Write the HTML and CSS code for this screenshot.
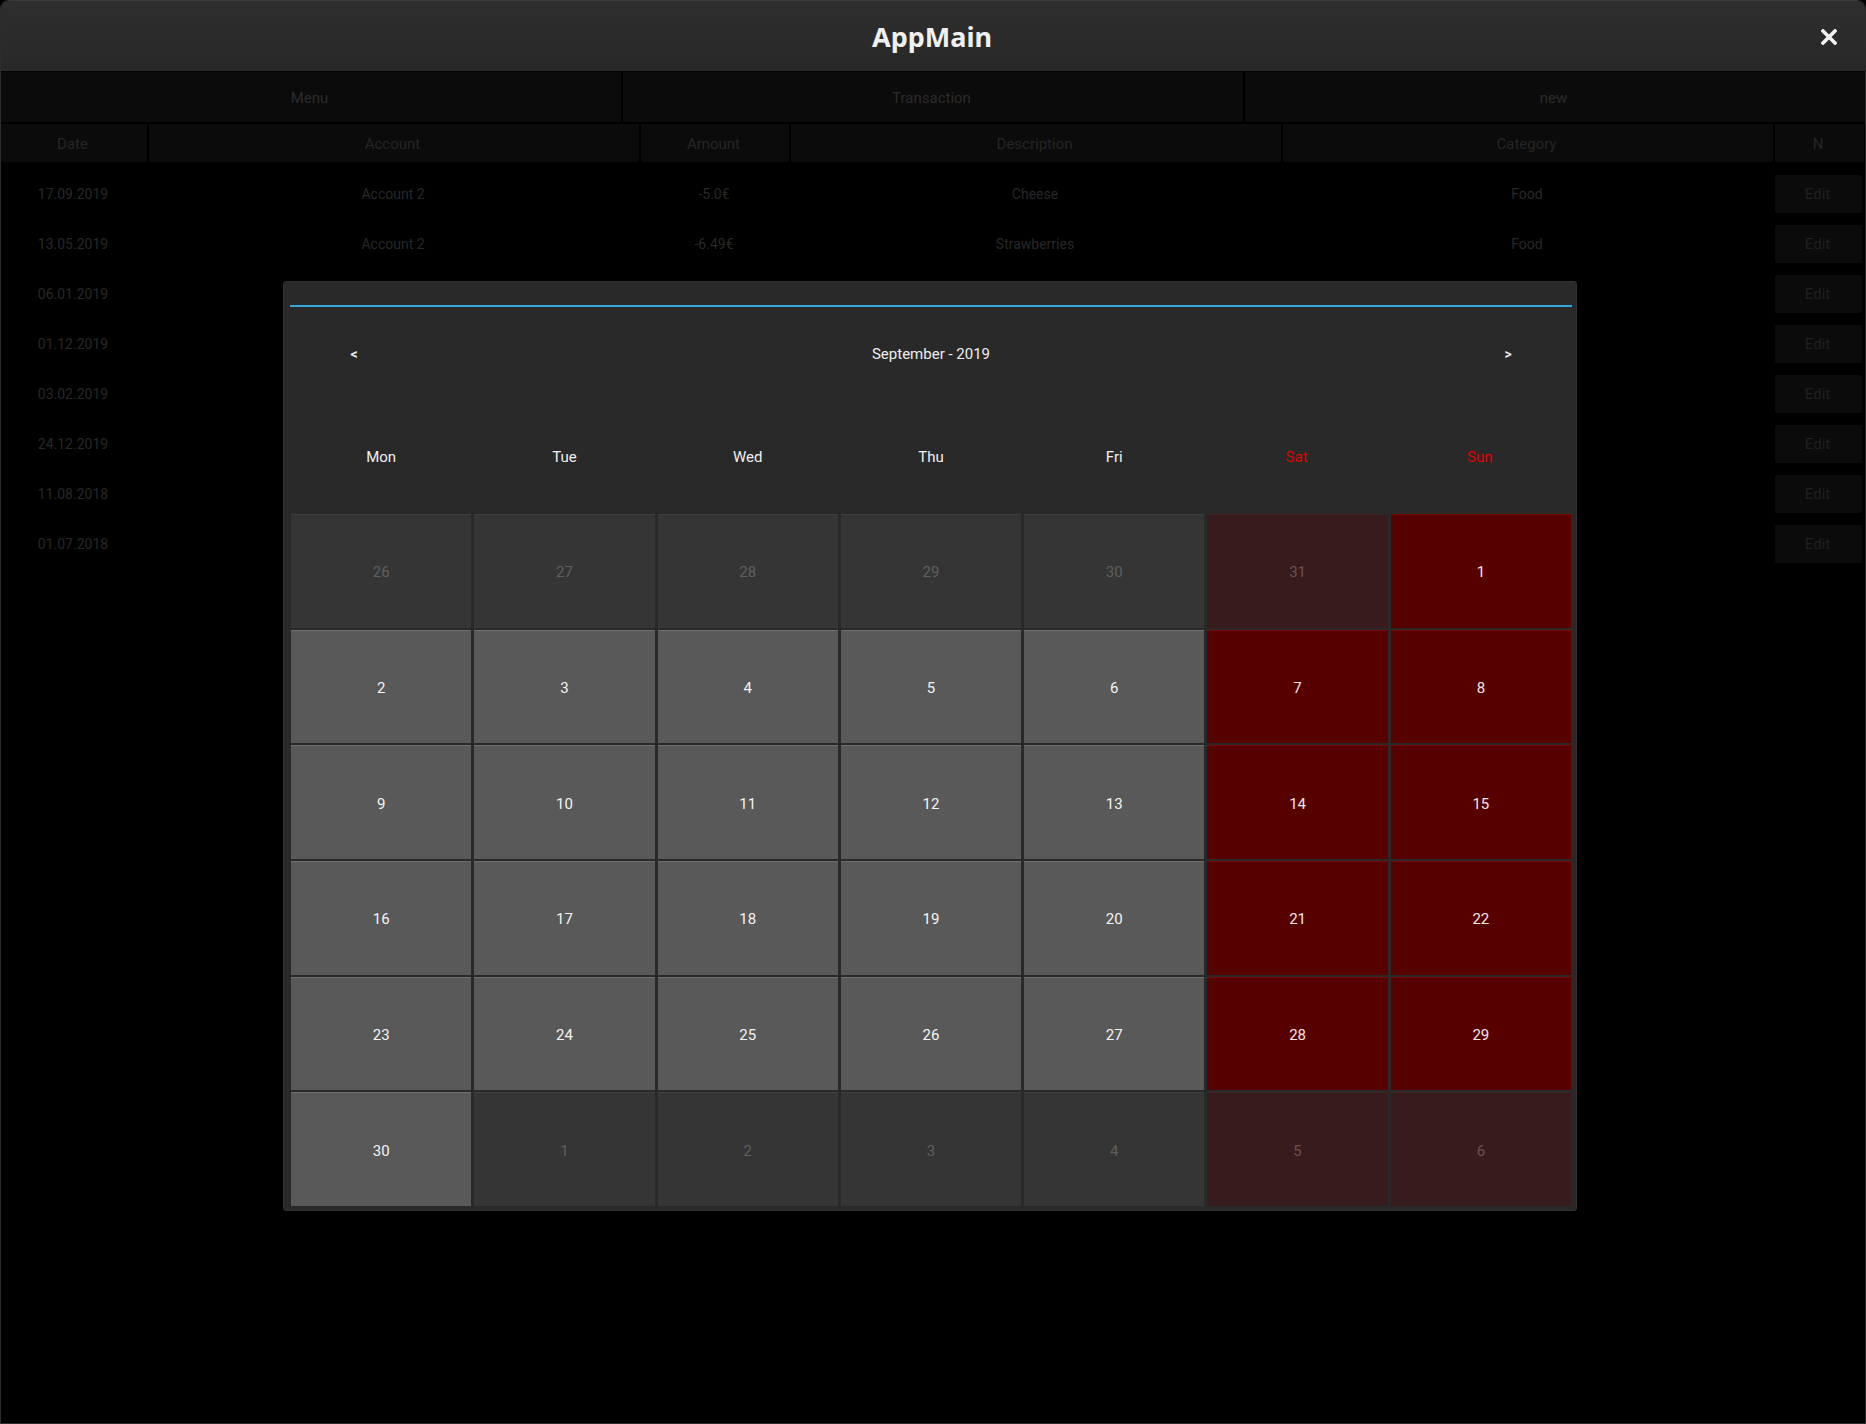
FILE: index.html
```html
<!DOCTYPE html>
<html>
<head>
<meta charset="utf-8">
<title>AppMain</title>
<link rel="stylesheet" href="styles.css">
</head>
<body>
<div class="window">
  <header class="titlebar">
    <div class="title">AppMain</div>
    <div class="close">
      <svg width="16" height="16" viewBox="0 0 16 16"><path d="M2 2 L14 14 M14 2 L2 14" stroke="#f2f2f2" stroke-width="3.6" stroke-linecap="square"/></svg>
    </div>
  </header>

  <nav class="tabs">
    <div class="tab">Menu</div>
    <div class="tab">Transaction</div>
    <div class="tab">new</div>
  </nav>

  <div class="table">
    <div class="thead">
      <div class="th">Date</div>
      <div class="th">Account</div>
      <div class="th">Amount</div>
      <div class="th">Description</div>
      <div class="th">Category</div>
      <div class="th">N</div>
    </div>
    <div class="tbody">
      <div class="tr"><div class="td">17.09.2019</div><div class="td">Account 2</div><div class="td">-5.0€</div><div class="td">Cheese</div><div class="td">Food</div><div class="td"><span class="edit">Edit</span></div></div>
      <div class="tr"><div class="td">13.05.2019</div><div class="td">Account 2</div><div class="td">-6.49€</div><div class="td">Strawberries</div><div class="td">Food</div><div class="td"><span class="edit">Edit</span></div></div>
      <div class="tr"><div class="td">06.01.2019</div><div class="td"></div><div class="td"></div><div class="td"></div><div class="td"></div><div class="td"><span class="edit">Edit</span></div></div>
      <div class="tr"><div class="td">01.12.2019</div><div class="td"></div><div class="td"></div><div class="td"></div><div class="td"></div><div class="td"><span class="edit">Edit</span></div></div>
      <div class="tr"><div class="td">03.02.2019</div><div class="td"></div><div class="td"></div><div class="td"></div><div class="td"></div><div class="td"><span class="edit">Edit</span></div></div>
      <div class="tr"><div class="td">24.12.2019</div><div class="td"></div><div class="td"></div><div class="td"></div><div class="td"></div><div class="td"><span class="edit">Edit</span></div></div>
      <div class="tr"><div class="td">11.08.2018</div><div class="td"></div><div class="td"></div><div class="td"></div><div class="td"></div><div class="td"><span class="edit">Edit</span></div></div>
      <div class="tr"><div class="td">01.07.2018</div><div class="td"></div><div class="td"></div><div class="td"></div><div class="td"></div><div class="td"><span class="edit">Edit</span></div></div>
    </div>
  </div>

  <div class="dialog">
    <div class="input"></div>
    <div class="nav">
      <div class="navbtn">&lt;</div>
      <div class="month">September - 2019</div>
      <div class="navbtn">&gt;</div>
    </div>
    <div class="weekdays">
      <div class="wd">Mon</div>
      <div class="wd">Tue</div>
      <div class="wd">Wed</div>
      <div class="wd">Thu</div>
      <div class="wd">Fri</div>
      <div class="wd we">Sat</div>
      <div class="wd we">Sun</div>
    </div>
    <div class="grid">
      <div class="day dim">26</div><div class="day dim">27</div><div class="day dim">28</div><div class="day dim">29</div><div class="day dim">30</div><div class="day wdim">31</div><div class="day wknd">1</div>
      <div class="day">2</div><div class="day">3</div><div class="day">4</div><div class="day">5</div><div class="day">6</div><div class="day wknd">7</div><div class="day wknd">8</div>
      <div class="day">9</div><div class="day">10</div><div class="day">11</div><div class="day">12</div><div class="day">13</div><div class="day wknd">14</div><div class="day wknd">15</div>
      <div class="day">16</div><div class="day">17</div><div class="day">18</div><div class="day">19</div><div class="day">20</div><div class="day wknd">21</div><div class="day wknd">22</div>
      <div class="day">23</div><div class="day">24</div><div class="day">25</div><div class="day">26</div><div class="day">27</div><div class="day wknd">28</div><div class="day wknd">29</div>
      <div class="day">30</div><div class="day dim">1</div><div class="day dim">2</div><div class="day dim">3</div><div class="day dim">4</div><div class="day wdim">5</div><div class="day wdim">6</div>
    </div>
  </div>
</div>
</body>
</html>
```

FILE: styles.css
```css
* { box-sizing: border-box; }

html, body {
  margin: 0;
  padding: 0;
  background: #000;
}

body {
  font-family: Roboto, "Liberation Sans", sans-serif;
  font-size: 15px;
}

.window {
  position: relative;
  width: 1866px;
  height: 1424px;
  background: #000;
  border: 1px solid #2c2c2c;
  border-top-color: #3a3a3a;
  border-radius: 9px 9px 0 0;
  overflow: hidden;
}

.titlebar {
  position: relative;
  height: 71px;
  background: linear-gradient(#2e2e2e, #282828);
  border-bottom: 1px solid #050505;
  display: flex;
  align-items: center;
  justify-content: center;
}

.title {
  font-family: "Noto Sans", "Open Sans", sans-serif;
  font-weight: bold;
  font-size: 27px;
  color: #f0f0f0;
  margin-top: 0;
  margin-left: -2px;
}

.close {
  position: absolute;
  right: 28px;
  top: 28px;
  width: 16px;
  height: 16px;
  display: flex;
}

.tabs {
  display: flex;
  gap: 2px;
  height: 50px;
}

.tab {
  flex: 1;
  background: #0b0b0b;
  color: #2b2b2b;
  display: flex;
  align-items: center;
  justify-content: center;
  padding: 2px 3px 0 0;
}

.table {
  margin-top: 2px;
}

.thead, .tr {
  display: grid;
  grid-template-columns: 146px 490px 148px 490px 490px 89px;
  column-gap: 2px;
}

.thead {
  height: 38px;
}

.th {
  background: #0b0b0b;
  color: #262626;
  display: flex;
  align-items: center;
  justify-content: center;
  padding: 1px 3px 0 0;
}

.tbody {
  padding-top: 6px;
}

.tr {
  height: 50px;
}

.td {
  color: #282828;
  display: flex;
  align-items: center;
  justify-content: center;
  font-size: 14px;
  padding: 2px 2px 0 0;
}

.edit {
  width: 100%;
  height: 38px;
  background: #0b0b0b;
  color: #202020;
  display: flex;
  align-items: center;
  justify-content: center;
  border-radius: 2px;
  font-size: 15px;
  padding-right: 2px;
}

.dialog {
  position: absolute;
  left: 282px;
  top: 280px;
  width: 1294px;
  height: 930px;
  background: #292929;
  border: 1px solid #313131;
  border-radius: 3px;
  padding: 0 4px 4px 6px;
  display: flex;
  flex-direction: column;
}

.input {
  height: 25px;
  border-bottom: 2px solid #33a7d8;
  flex: none;
}

.nav {
  height: 94px;
  display: flex;
  align-items: center;
  flex: none;
}

.navbtn {
  width: 128px;
  text-align: center;
  color: #e6e6e6;
  font-weight: bold;
  font-size: 14px;
}

.month {
  flex: 1;
  text-align: center;
  color: #eeeeee;
}

.weekdays {
  height: 112px;
  display: grid;
  grid-template-columns: repeat(7, 1fr);
  column-gap: 3px;
  align-items: center;
  margin: 0 1px;
  flex: none;
}

.wd {
  text-align: center;
  color: #f0f0f0;
}

.wd.we {
  color: #e00000;
  padding-right: 2px;
}

.grid {
  margin: 1px 1px 0 1px;
  height: 692px;
  display: grid;
  grid-template-columns: repeat(7, 1fr);
  grid-template-rows: repeat(6, 1fr);
  gap: 2px 3px;
}

.day {
  background: #595959;
  border-top: 1px solid #707070;
  color: #f4f4f4;
  display: flex;
  align-items: center;
  justify-content: center;
  padding-top: 2px;
}

.day.dim {
  background: #353535;
  border-top-color: #3e3e3e;
  color: #5f5f5f;
}

.day.wknd {
  background: #560000;
  border-top-color: #7a0606;
  color: #f2e6e6;
}

.day.wdim {
  background: #381b1c;
  border-top-color: #402223;
  color: #6e5052;
}
```
